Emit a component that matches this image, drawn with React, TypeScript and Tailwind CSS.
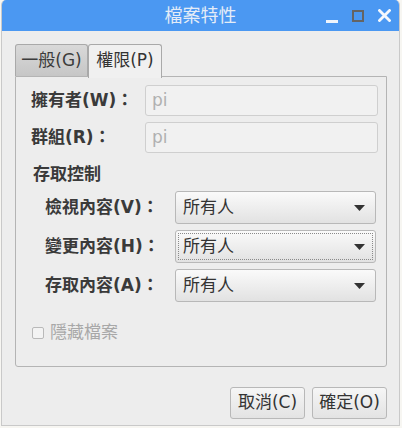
import React from "react";

const font = { fontFamily: '"DejaVu Sans", "Noto Sans CJK TC", sans-serif' };

function Entry() {
  return (
    <div className="h-[31px] rounded-[3px] border border-[#cfcfcf] bg-[#f1f1f1] flex items-center pl-[6px] text-[17px] text-[#b0b0b0]">
      pi
    </div>
  );
}

function Combo({ focus }: { focus?: boolean }) {
  return (
    <div className="h-[33px] rounded-[3px] border border-[#b8b8b8] bg-gradient-to-b from-[#fafafa] to-[#e2e2e2] p-[2px]">
      <div
        className={
          "h-full flex items-center justify-between pl-[4px] pr-[7px] " +
          (focus ? "border border-dotted border-[#8a8a8a]" : "border border-transparent")
        }
      >
        <span className="text-[17px] text-[#333]">所有人</span>
        <svg width="11" height="6" viewBox="0 0 11 6">
          <polygon points="0,0 11,0 5.5,6" fill="#333" />
        </svg>
      </div>
    </div>
  );
}

export default function App() {
  return (
    <div className="w-[402px] h-[428px] bg-[#f7f6f2] overflow-hidden" style={font}>
      <div className="ml-[1px] w-[399px] h-[426px] flex flex-col rounded-t-[5px] overflow-hidden border-x border-b border-[#c9c9c9] bg-[#ededed]">
        {/* title bar */}
        <div className="h-[31px] shrink-0 bg-[#4b98f2] relative flex items-center justify-center">
          <span className="text-[18px] text-[#e4ecf7]">檔案特性</span>
          <div className="absolute right-[8px] top-0 h-full flex items-center gap-[14px]">
            <div className="w-[12px] h-[12px] flex items-end">
              <div className="w-[12px] h-[3px] bg-[#eef4fc] mb-[-1px]" />
            </div>
            <div className="w-[12px] h-[12px] border-[2.5px] border-[#646464]" />
            <svg width="13" height="13" viewBox="0 0 13 13">
              <path d="M1.5 1.5 L11.5 11.5 M11.5 1.5 L1.5 11.5" stroke="#f4f8fd" strokeWidth="2.8" strokeLinecap="square" />
            </svg>
          </div>
        </div>

        {/* content */}
        <div className="flex-1 flex flex-col pl-[13px] pr-[12px] pt-[12px]">
          {/* tabs */}
          <div className="flex items-end h-[34px] relative z-10">
            <div className="w-[73px] h-[32px] rounded-t-[3px] border border-b-0 border-[#a9a9a9] bg-gradient-to-b from-[#d9d9d9] to-[#c6c6c6] flex items-center justify-center text-[17px] text-[#3c3c3c] mb-[1px]">
              一般(G)
            </div>
            <div className="w-[74px] h-[34px] rounded-t-[3px] border border-b-0 border-[#a9a9a9] bg-[#f0f0f0] flex items-center justify-center text-[17px] text-[#333] -mb-px pb-[2px]">
              權限(P)
            </div>
          </div>

          {/* panel */}
          <div className="h-[291px] -mt-px border border-[#b4b4b4] rounded-b-[3px] bg-[#ededed] flex flex-col pl-[15px] pr-[8px] pt-[8px]">
            <div className="grid grid-cols-[114px_1fr] gap-y-[6px] items-center">
              <span className="text-[17px] font-bold text-[#3a3a3a]">擁有者(W)：</span>
              <Entry />
              <span className="text-[17px] font-bold text-[#3a3a3a]">群組(R)：</span>
              <Entry />
            </div>
            <div className="mt-[9px] text-[17px] font-bold text-[#3a3a3a] leading-[24px] pl-[2px]">存取控制</div>
            <div className="mt-[5px] pl-[14px] pr-[2px] grid grid-cols-[130px_1fr] gap-y-[6px] items-center">
              <span className="text-[17px] font-bold text-[#3a3a3a]">檢視內容(V)：</span>
              <Combo />
              <span className="text-[17px] font-bold text-[#3a3a3a]">變更內容(H)：</span>
              <Combo focus />
              <span className="text-[17px] font-bold text-[#3a3a3a]">存取內容(A)：</span>
              <Combo />
            </div>
            <div className="mt-[18px] flex items-center gap-[6px] pl-[1px]">
              <div className="w-[12px] h-[12px] rounded-[2px] border border-[#b9b9b9] bg-[#f3f3f3]" />
              <span className="text-[17px] text-[#a8a8a8]">隱藏檔案</span>
            </div>
          </div>

          {/* buttons */}
          <div className="mt-[20px] flex justify-end gap-[7px]">
            <div className="w-[75px] h-[32px] rounded-[3px] border border-[#b8b8b8] bg-gradient-to-b from-[#f6f6f6] to-[#e3e3e3] flex items-center justify-center text-[17px] text-[#333]">
              取消(C)
            </div>
            <div className="w-[75px] h-[32px] rounded-[3px] border border-[#b8b8b8] bg-gradient-to-b from-[#f6f6f6] to-[#e3e3e3] flex items-center justify-center text-[17px] text-[#333]">
              確定(O)
            </div>
          </div>
        </div>
      </div>
    </div>
  );
}
